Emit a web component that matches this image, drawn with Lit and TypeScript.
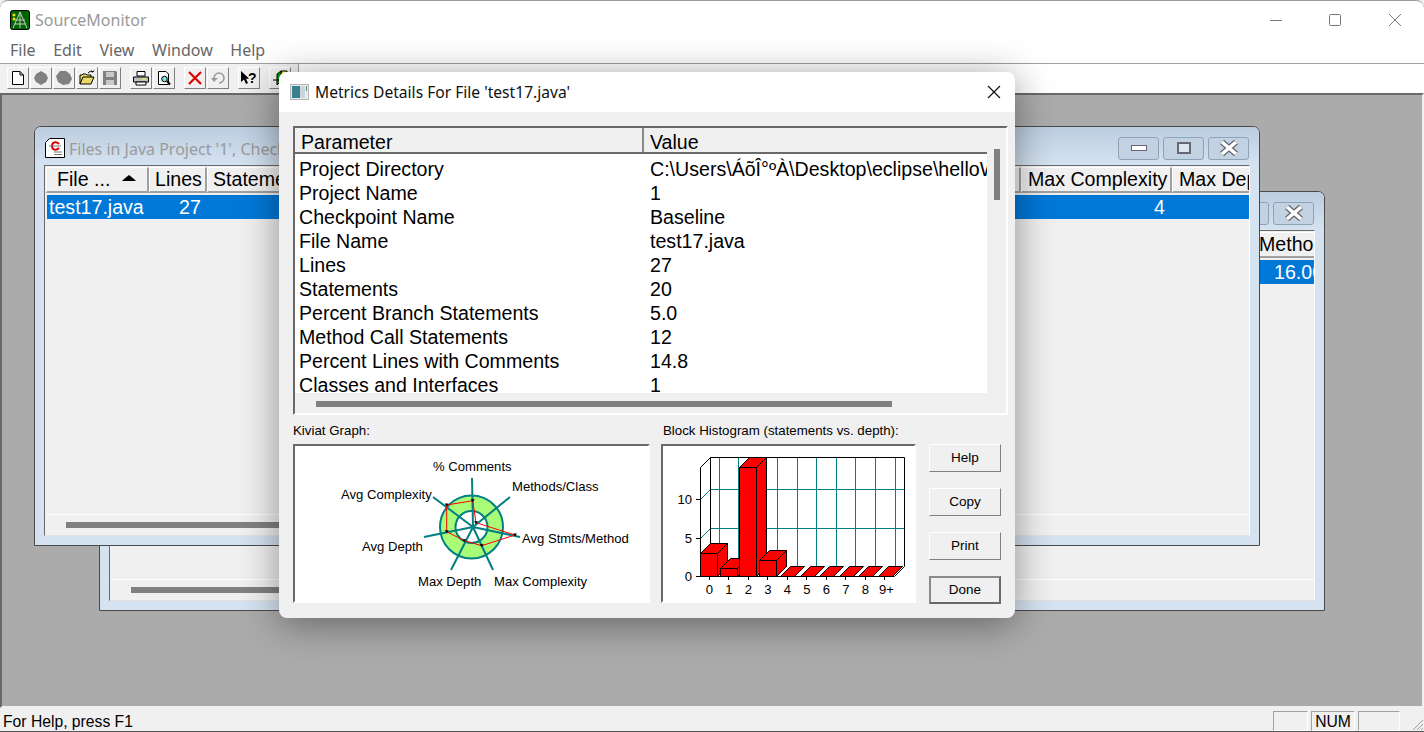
import { LitElement, css, html, svg } from "lit";
import { customElement } from "lit/decorators.js";

const params = [
  ["Project Directory", "C:\\Users\\ÁõÎ°ºÀ\\Desktop\\eclipse\\helloWorld\\src"],
  ["Project Name", "1"],
  ["Checkpoint Name", "Baseline"],
  ["File Name", "test17.java"],
  ["Lines", "27"],
  ["Statements", "20"],
  ["Percent Branch Statements", "5.0"],
  ["Method Call Statements", "12"],
  ["Percent Lines with Comments", "14.8"],
  ["Classes and Interfaces", "1"],
];

const spokes = [
  [472, 478], [510, 497], [520, 537], [493, 570], [451, 570], [424, 537], [433, 497],
];
const kiviatPts = [
  [472.7, 500.7], [476, 522.7], [515, 535], [481.7, 545.7], [464.3, 540.7], [446.7, 531.7], [446.7, 505],
];

// histogram bars: front-left x, top y (floor is at 576)
const bars = [
  [0, 553.5], [1, 568.5], [2, 467.5], [3, 560.5],
  [4, 576], [5, 576], [6, 576], [7, 576], [8, 576], [9, 576],
];

@customElement("mdi-window")
export class MdiWindow extends LitElement {
  static styles = css`
    :host {
      position: absolute;
      display: block;
      box-sizing: border-box;
      width: 1226px;
      height: 420px;
      background: #d5e2f0;
      border: 1px solid #4a4a4a;
      border-radius: 7px 7px 0 0;
      font-family: "Liberation Sans", sans-serif;
    }
    .title {
      height: 38px;
      box-sizing: border-box;
      display: flex;
      align-items: center;
      padding: 4px 10px 0;
      gap: 4px;
      border-radius: 6px 6px 0 0;
      background: linear-gradient(#bccde0, #d5e2f0);
      color: #9a9a9a;
      font: 16px "Noto Sans", sans-serif;
      white-space: nowrap;
      overflow: hidden;
    }
    .title span { flex: 1; padding-top: 2px; }
    .wb {
      width: 41px;
      height: 23px;
      box-sizing: border-box;
      border: 1px solid #8fa3b8;
      border-radius: 3px;
      background: #c3d2e3;
      display: flex;
      align-items: center;
      justify-content: center;
    }
    .client {
      margin: 0 9px;
      height: 371px;
      box-sizing: border-box;
      background: #f0f0f0;
      border-top: 1px solid #696969;
      border-left: 1px solid #696969;
      border-right: 1px solid #fff;
      border-bottom: 1px solid #e3e3e3;
      display: flex;
      flex-direction: column;
      overflow: hidden;
      padding: 0 0 0 1px;
    }
    .head {
      display: flex;
      height: 26px;
      flex: none;
      margin-top: 1px;
      font-size: 19.6px;
      color: #000;
    }
    .col {
      box-sizing: border-box;
      flex: none;
      background: #f0f0f0;
      border: 1px solid #fff;
      border-right: 2px solid #a0a0a0;
      border-bottom: 2px solid #a0a0a0;
      line-height: 23px;
      padding-left: 5px;
      white-space: nowrap;
      overflow: hidden;
      position: relative;
    }
    .sel {
      display: flex;
      flex: none;
      height: 24px;
      margin: 2px 0 0 1px;
      background: #0078d7;
      color: #fff;
      font-size: 19.6px;
      line-height: 24px;
      white-space: nowrap;
      overflow: hidden;
    }
    .fill { flex: 1; }
    .scroll {
      flex: none;
      height: 21px;
      border-top: 1px solid #fff;
      box-sizing: border-box;
      padding: 7px 0 0 20px;
    }
    .thumb { width: 540px; height: 6px; background: #808080; }
  `;

  static properties = { kind: {} };
  kind = "files";

  render() {
    const wb = (glyph: unknown) => html`<div class="wb">${glyph}</div>`;
    const close = svg`<svg width="20" height="16" viewBox="0 0 20 16"><path d="M3 2 L17 14 M17 2 L3 14" stroke="#666" stroke-width="6"/><path d="M3 2 L17 14 M17 2 L3 14" stroke="#fff" stroke-width="3.6"/></svg>`;
    const head =
      this.kind === "files"
        ? html`
            <div class="col" style="width:103px;padding-left:10px">File ...<svg style="position:absolute;left:74px;top:7px" width="16" height="8"><path d="M8 0 L13 4 L15 6 L1 6 L3 4 Z" fill="#000"/></svg></div>
            <div class="col" style="width:58px">Lines</div>
            <div class="col" style="width:814px">Statements</div>
            <div class="col" style="width:151px;padding-left:6px">Max Complexity</div>
            <div class="col" style="width:80px;padding-left:6px">Max Depth</div>
          `
        : html`
            <div class="col" style="width:1147px"></div>
            <div class="col" style="width:63px;padding-left:0">Method</div>
          `;
    const row =
      this.kind === "files"
        ? html`
            <span style="margin-left:2px;width:130px">test17.java</span>
            <span>27</span>
            <span class="fill"></span>
            <span style="margin-right:84px">4</span>
          `
        : html`
            <span class="fill"></span>
            <span style="width:40px">16.00</span>
          `;
    return html`
      <div class="title">
        ${this.kind === "files"
          ? html`
              <svg width="20" height="20" viewBox="0 0 20 20">
                <path d="M.5 4.5 L4.5.5 H19.5 V19.5 H.5 Z" fill="#fff" stroke="#000"/>
                <path d="M14 6 C11 3 7 4 7 8 C7 12 11 13 14 10" fill="none" stroke="#e00000" stroke-width="2"/>
                <path d="M4 8 H16 M9 14 H17 M9 16.500 H17" stroke="#777" fill="none"/>
              </svg>
              <span>Files in Java Project '1', Checkpoint 'Baseline'</span>
            `
          : html`<span></span>`}
        ${wb(svg`<svg width="16" height="6"><rect x=".5" y=".5" width="15" height="5" fill="#fff" stroke="#667"/></svg>`)}
        ${wb(svg`<svg width="14" height="12"><rect x="1" y="1" width="12" height="10" fill="#dde6ef" stroke="#667" stroke-width="2"/></svg>`)}
        ${wb(close)}
      </div>
      <div class="client">
        <div class="head">${head}</div>
        <div class="sel">${row}</div>
        <div class="fill"></div>
        <div class="scroll"><div class="thumb"></div></div>
      </div>
    `;
  }
}

@customElement("app-root")
export class AppRoot extends LitElement {
  static styles = css`
    :host {
      display: block;
      width: 1424px;
      height: 732px;
      position: relative;
      overflow: hidden;
      background: #ababab;
      font-family: "Liberation Sans", sans-serif;
    }
    .frame {
      width: 1424px;
      height: 732px;
      display: flex;
      flex-direction: column;
      background: #f0f0f0;
    }
    .titlebar {
      height: 38px;
      flex: none;
      background: #fff;
      display: flex;
      align-items: center;
      padding-left: 10px;
      color: #999;
      font: 16px "Noto Sans", sans-serif;
      border-top: 1px solid #9c9c9c;
      box-sizing: border-box;
      border-radius: 8px 8px 0 0;
    }
    .titlebar .name { flex: 1; margin-left: 5px; }
    .caption {
      width: 59px;
      display: flex;
      justify-content: center;
    }
    .menu {
      height: 25px;
      flex: none;
      background: #fff;
      display: flex;
      gap: 17.6px;
      padding-left: 10px;
      color: #666;
      font: 16px/24px "Noto Sans", sans-serif;
      border-bottom: 1px solid #a0a0a0;
    }
    .toolbar {
      height: 29px;
      flex: none;
      background: #fff;
    }
    .bar {
      width: 299px;
      height: 29px;
      display: flex;
      align-items: flex-start;
      padding: 3px 0 0 7px;
      box-sizing: border-box;
      background: #f0f0f0;
      border-right: 1px solid #a0a0a0;
    }
    .tb {
      width: 22px;
      height: 22px;
      margin-right: 1px;
      background: #f0f0f0;
      box-sizing: border-box;
      border: 1px solid;
      border-color: #fff #808080 #808080 #fff;
      display: flex;
      align-items: center;
      justify-content: center;
    }
    .sep { width: 8px; flex: none; }
    .mdi {
      flex: 1;
      position: relative;
      background: #ababab;
      border: 2px solid;
      border-color: #696969 #f0f0f0 #f0f0f0 #696969;
      overflow: hidden;
    }
    .status {
      height: 24px;
      flex: none;
      display: flex;
      font-size: 15.7px;
      line-height: 24px;
      padding: 3px 0 0 3px;
      box-sizing: border-box;
      color: #000;
      border-bottom: 1px solid #555;
    }
    .status .msg { flex: 1; margin-top: -1px; }
    .pane {
      box-sizing: border-box;
      height: 20px;
      width: 35px;
      margin-right: 3px;
      border: 1px solid;
      border-color: #a0a0a0 #fff #fff #a0a0a0;
      text-align: center;
      line-height: 20px;
      overflow: hidden;
    }
    .grip { width: 24px; display: flex; justify-content: flex-end; align-items: flex-end; }

    .dialog {
      position: absolute;
      left: 279px;
      top: 72px;
      width: 736px;
      height: 546px;
      border-radius: 8px;
      background: #f0f0f0;
      box-shadow: 0 6px 38px rgba(0, 0, 0, 0.42);
      display: flex;
      flex-direction: column;
      overflow: hidden;
    }
    .dlg-title {
      height: 40px;
      flex: none;
      background: #fff;
      display: flex;
      align-items: center;
      padding-left: 11px;
      gap: 5px;
      font: 15.6px "Noto Sans", sans-serif;
      color: #111;
    }
    .dlg-title .name { flex: 1; }
    .dlg-close { width: 42px; display: flex; justify-content: center; }
    .dlg-body { flex: 1; padding: 14px 7px 0 14px; display: flex; flex-direction: column; }
    .list {
      height: 289px;
      flex: none;
      box-sizing: border-box;
      border: 2px solid;
      border-color: #696969 #fff #fff #696969;
      background: #fff;
      position: relative;
      overflow: hidden;
    }
    .list-head {
      display: flex;
      height: 26px;
      font-size: 19.6px;
      margin-right: 19px;
      background: #f0f0f0;
      border-bottom: 2px solid #696969;
      box-sizing: border-box;
    }
    .list-head div {
      box-sizing: border-box;
      padding-left: 6px;
      line-height: 28px;
      white-space: nowrap;
    }
    .p-col { width: 349px; border-right: 2px solid #8a8a8a; }
    .v-col { flex: 1; }
    .rows {
      padding-top: 3px;
      font-size: 19.6px;
      line-height: 24px;
      white-space: nowrap;
      overflow-x: clip;
      margin-right: 19px;
      height: 239px;
      box-sizing: border-box;
    }
    .r { display: flex; }
    .r .k { width: 355px; padding-left: 4px; box-sizing: border-box; flex: none; }
    .vbar {
      position: absolute;
      right: 0;
      top: 0;
      bottom: 0;
      width: 19px;
      background: #f0f0f0;
      padding: 21px 0 0 7px;
      box-sizing: border-box;
    }
    .vthumb { width: 6px; height: 51px; background: #808080; }
    .hbar {
      position: relative;
      height: 22px;
      background: #f0f0f0;
      box-sizing: border-box;
      padding: 8px 0 0 21px;
      margin-right: 19px;
    }
    .hthumb { width: 576px; height: 6px; background: #808080; }
    .lower { display: flex; margin-top: 8px; }
    .cap { font-size: 13.3px; line-height: 15px; height: 21px; white-space: nowrap; }
    .his .cap { padding-left: 2px; }
    .box {
      box-sizing: border-box;
      height: 159px;
      border: 2px solid;
      border-color: #696969 #fff #fff #696969;
      background: #fff;
      overflow: hidden;
    }
    .box svg { display: block; }
    .kiv { width: 368px; }
    .kiv .box { width: 357px; }
    .his { width: 268px; }
    .his .box { width: 255px; }
    .btns { display: flex; flex-direction: column; gap: 16px; padding-top: 21px; }
    .btn {
      width: 72px;
      height: 28px;
      box-sizing: border-box;
      background: #f0f0f0;
      border: 1px solid;
      border-color: #fff #808080 #808080 #fff;
      font-size: 13.5px;
      text-align: center;
      line-height: 26px;
    }
    .btn.def { border: 2px solid; border-color: #8a8a8a #696969 #696969 #8a8a8a; line-height: 24px; }
    text { font-family: "Liberation Sans", sans-serif; font-size: 13.1px; fill: #000; }
  `;

  // toolbar glyphs, a 22px button holds a 16px picture
  icons = {
    page: svg`<path d="M2.500 1.500 H10 L13.500 5 V14.500 H2.500 Z M10 1.500 V5 H13.500" fill="#fff" stroke="#000"/>`,
    dot: svg`<path d="M8 1 L13 4 L15 8 L13 12 L8 15 L3 12 L1 8 L3 4 Z" fill="#808080"/>`,
    dots: svg`<path d="M4 1 L10 1 L14 4 L16 9 L13 14 L7 15 L2 12 L0 6 Z" fill="#808080"/>`,
    open: svg`<path d="M1 14 V5 H3 L4 4 H7 L8 5 H12 V7 M1 14 L4 7 H15 L12 14 Z" fill="#e8d968" stroke="#000"/><path d="M9 3 Q11 0 14 2 M14 2 L15 .5 M14 2 L12.500 1" stroke="#000" fill="none"/>`,
    save: svg`<path d="M1 1 H14 L15 2 V15 H1 Z" fill="#808080"/><rect x="4" y="2" width="8" height="5" fill="#c8c8c8"/><rect x="4" y="10" width="8" height="5" fill="#c8c8c8"/>`,
    print: svg`<path d="M4 1.500 H12 V6 H4 Z" fill="#fff" stroke="#000"/><path d="M.5 7 H15.500 V12 H.5 Z" fill="#c0c0c0" stroke="#000"/><path d="M3 12 H13 V15 H3 Z" fill="#fff" stroke="#000"/><path d="M9 9 H13" stroke="#e8d968" stroke-width="2"/>`,
    preview: svg`<path d="M2.500 1.500 H10 L12.500 4 V14.500 H2.500 Z" fill="#fff" stroke="#000"/><circle cx="8.500" cy="9" r="2.800" fill="#7fe0e8" stroke="#000"/><path d="M11 11 L14 14.500" stroke="#000" stroke-width="2"/>`,
    x: svg`<path d="M2 2 L14 14 M14 2 L2 14" stroke="#e00000" stroke-width="2.200"/>`,
    undo: svg`<path d="M4 8 A5 5 0 1 1 9 13" fill="none" stroke="#999" stroke-width="1.500"/><path d="M1 8 H8 L4 12 Z" fill="#999"/>`,
    help: svg`<path d="M0 1 L0 12 L3 9.500 L5 14 L7 13 L5 9 L8 8.500 Z" fill="#000"/><text x="7" y="13" style="font-size:14px;font-weight:bold">?</text>`,
    green: svg`<path d="M9 1 H15 V11 H9 Z" fill="#e8e800" stroke="#000"/><path d="M9 1 L5 4 V15 L9 11 Z" fill="#00a000" stroke="#000"/><path d="M1 10 H7" stroke="#000"/>`,
  };

  tb(icon: unknown) {
    return html`<div class="tb"><svg width="16" height="16" viewBox="0 0 16 16">${icon}</svg></div>`;
  }

  kiviat() {
    return svg`<svg width="353" height="155" viewBox="295 446 353 155">
      <circle cx="471.500" cy="527" r="23.750" fill="none" stroke="#a8fc78" stroke-width="15.500"/>
      <circle cx="471.500" cy="527" r="31.500" fill="none" stroke="#008080" stroke-width="2"/>
      <circle cx="471.500" cy="527" r="16" fill="none" stroke="#008080" stroke-width="2"/>
      ${spokes.map(([x, y]) => svg`<line x1="473" y1="527" x2=${x} y2=${y} stroke="#008080" stroke-width="2"/>`)}
      <polygon points=${kiviatPts.map((p) => p.join(",")).join(" ")} fill="none" stroke="#ff0000"/>
      ${kiviatPts.map(([x, y]) => svg`<path d="M${x - 2} ${y - 1.5} H${x + 2} L${x} ${y + 1.5} Z" fill="#000"/>`)}
      <text x="433" y="471">% Comments</text>
      <text x="512" y="491">Methods/Class</text>
      <text x="341" y="499">Avg Complexity</text>
      <text x="522" y="543">Avg Stmts/Method</text>
      <text x="362" y="551">Avg Depth</text>
      <text x="418" y="586">Max Depth</text>
      <text x="494" y="586">Max Complexity</text>
    </svg>`;
  }

  histogram() {
    const vx = [719.5, 738.5, 757.5, 777.5, 797.5, 816.5, 836.5, 855.5, 875.5, 895.5];
    return svg`<svg width="251" height="155" viewBox="663 446 251 155">
      ${vx.map((x) => svg`<line x1=${x} y1="457" x2=${x} y2="566" stroke="#008080"/>`)}
      ${[489.5, 528.5].map((y) => svg`<path d="M700.500 ${y + 10} L710.500 ${y} H904.500" fill="none" stroke="#008080"/>`)}
      <path d="M700.500 576.500 V467.500 L710.500 457.500 H904.500 V566.500 L894.500 576.500 H700.500" fill="none" stroke="#000"/>
      <path d="M710.500 457.500 V566.500" stroke="#000"/>
      ${bars.map(([i, top]) => {
        const x = Math.round(700 + 19.5 * i) + 0.5;
        const w = 17;
        const t = Math.floor(top) + 0.5;
        const b = 576.5;
        if (top === 576) {
          return svg`<path d="M${x + 2} ${b} L${x + 12} ${b - 10} H${x + w + 9} L${x + w - 1} ${b} Z" fill="#ff0000" stroke="#000"/>`;
        }
        return svg`
          <path d="M${x + w} ${t} L${x + w + 10} ${t - 10} V${b - 10} L${x + w} ${b} Z" fill="#ff0000" stroke="#000"/>
          <path d="M${x} ${t} L${x + 10} ${t - 10} H${x + w + 10} L${x + w} ${t} Z" fill="#ff0000" stroke="#000"/>
          <rect x=${x} y=${t} width=${w} height=${b - t} fill="#ff0000" stroke="#000"/>`;
      })}
      <path d="M696 499.500 H701 M696 538.500 H701 M696 576.500 H701" stroke="#000"/>
      ${["0", "1", "2", "3", "4", "5", "6", "7", "8", "9+"].map((l, i) => svg`<text x=${709.5 + 19.5 * i + (i === 9 ? 1.5 : 0)} y="594" text-anchor="middle">${l}</text>`)}
      <path d="M709.500 577 V580 M728.500 577 V580 M748.500 577 V580 M767.500 577 V580 M787.500 577 V580 M806.500 577 V580 M826.500 577 V580 M845.500 577 V580 M865.500 577 V580 M884.500 577 V580" stroke="#000"/>
      <text x="692" y="504" text-anchor="end">10</text>
      <text x="692" y="543" text-anchor="end">5</text>
      <text x="692" y="581" text-anchor="end">0</text>
    </svg>`;
  }

  render() {
    const i = this.icons;
    return html`
      <div class="frame">
        <div class="titlebar">
          <svg width="20" height="20" viewBox="0 0 20 20">
            <rect x=".5" y=".5" width="19" height="19" rx="2" fill="#006400" stroke="#000"/>
            <path d="M10 2 L3 18 M10 2 L17 18 M10 2 V18 M5 10 H15 M4 14 H16" stroke="#c8c8c8" fill="none"/>
            <circle cx="4" cy="5" r="1.500" fill="#e8e800"/>
            <circle cx="4" cy="9" r="1.500" fill="#e8e800"/>
          </svg>
          <span class="name">SourceMonitor</span>
          <div class="caption"><svg width="12" height="12"><path d="M0 6.500 H12" stroke="#777"/></svg></div>
          <div class="caption" style="margin-right:1px"><svg width="12" height="12"><rect x=".5" y=".5" width="11" height="11" rx="1" fill="none" stroke="#777"/></svg></div>
          <div class="caption"><svg width="14" height="14"><path d="M1 1 L13 13 M13 1 L1 13" stroke="#777" fill="none"/></svg></div>
        </div>
        <div class="menu">
          <span>File</span><span>Edit</span><span>View</span><span>Window</span><span>Help</span>
        </div>
        <div class="toolbar">
          <div class="bar">
            ${this.tb(i.page)}${this.tb(i.dot)}${this.tb(i.dots)}${this.tb(i.open)}${this.tb(i.save)}
            <div class="sep"></div>
            ${this.tb(i.print)}${this.tb(i.preview)}
            <div class="sep"></div>
            ${this.tb(i.x)}${this.tb(i.undo)}
            <div class="sep"></div>
            ${this.tb(i.help)}
            <div class="sep"></div>
            ${this.tb(i.green)}
          </div>
        </div>
        <div class="mdi">
          <mdi-window kind="metrics" style="left:97px;top:96px"></mdi-window>
          <mdi-window kind="files" style="left:32px;top:31px"></mdi-window>
        </div>
        <div class="status">
          <span class="msg">For Help, press F1</span>
          <div class="pane"></div>
          <div class="pane" style="width:44px;margin-right:3px">NUM</div>
          <div class="pane" style="width:42px;margin-right:0"></div>
          <div class="grip">
            <svg width="14" height="14"><path d="M13 3 L3 13 M13 7 L7 13 M13 11 L11 13" stroke="#a0a0a0" fill="none"/></svg>
          </div>
        </div>
      </div>

      <div class="dialog">
        <div class="dlg-title">
          <svg width="20" height="18" viewBox="0 0 20 18">
            <rect x=".5" y="1.500" width="18" height="15" fill="#e8ecec" stroke="#b5b5b5"/>
            <rect x="2" y="3" width="8" height="12" fill="#3a7f8f"/>
            <rect x="10" y="3" width="5" height="12" fill="#c8d8d8"/>
            <rect x="16" y="3" width="1" height="5" fill="#5a8a8a"/>
          </svg>
          <span class="name">Metrics Details For File 'test17.java'</span>
          <div class="dlg-close">
            <svg width="14" height="14"><path d="M1 1 L13 13 M13 1 L1 13" stroke="#111" stroke-width="1.200" fill="none"/></svg>
          </div>
        </div>
        <div class="dlg-body">
          <div class="list">
            <div class="list-head">
              <div class="p-col">Parameter</div>
              <div class="v-col">Value</div>
            </div>
            <div class="rows">
              ${params.map(
                ([k, v]) => html`<div class="r"><span class="k">${k}</span><span>${v}</span></div>`
              )}
            </div>
            <div class="hbar"><div class="hthumb"></div></div>
            <div class="vbar"><div class="vthumb"></div></div>
          </div>
          <div class="lower">
            <div class="kiv">
              <div class="cap">Kiviat Graph:</div>
              <div class="box">${this.kiviat()}</div>
            </div>
            <div class="his">
              <div class="cap">Block Histogram (statements vs. depth):</div>
              <div class="box">${this.histogram()}</div>
            </div>
            <div class="btns">
              <div class="btn">Help</div>
              <div class="btn">Copy</div>
              <div class="btn">Print</div>
              <div class="btn def">Done</div>
            </div>
          </div>
        </div>
      </div>
    `;
  }
}
